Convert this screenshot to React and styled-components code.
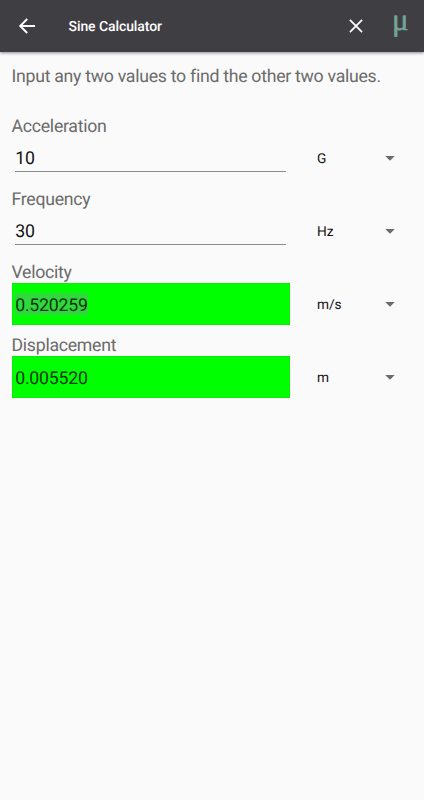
import React from "react";
import styled, { createGlobalStyle } from "styled-components";

const GlobalStyle = createGlobalStyle`
  *, *::before, *::after { box-sizing: border-box; }
  body { margin: 0; background: #fafafa; font-family: Roboto, sans-serif; text-rendering: geometricPrecision; }
`;

const Screen = styled.div`
  display: flex;
  flex-direction: column;
  height: 800px;
  overflow: hidden;
  background: #fafafa;
`;

const Toolbar = styled.header`
  display: flex;
  align-items: center;
  flex: none;
  height: 52px;
  padding: 0 14px 0 18px;
  background: #3f3e43;
  box-shadow: 0 1px 3px rgba(0, 0, 0, 0.45);
`;

const IconButton = styled.button`
  display: flex;
  padding: 0;
  border: 0;
  background: none;
  color: #fff;
`;

const Title = styled.h1`
  flex: 1;
  margin: 2px 0 0 32.5px;
  color: #fff;
  font-size: 14px;
  font-weight: 500;
  letter-spacing: -0.08px;
  line-height: 20px;
  white-space: nowrap;
`;

const Brand = styled.span`
  width: 18px;
  margin: -12px 0 0 29.5px;
  color: #74a598;
  font: 31px/36px "Liberation Serif", serif;
  -webkit-text-stroke: 0.5px #74a598;
`;

const Content = styled.main`
  padding: 14px 12px 14px 11.5px;
`;

const Intro = styled.p`
  margin: 0 0 29px;
  color: #6b6b6b;
  font-size: 17.7px;
  letter-spacing: -0.28px;
  line-height: 22px;
  white-space: nowrap;
`;

const Form = styled.div`
  display: flex;
  flex-direction: column;
  gap: 11px;
`;

const Quantity = styled.div`
  display: grid;
  grid-template-columns: 278.5px 1fr;
  grid-template-rows: 20px 42px;
  column-gap: 27px;
`;

const Label = styled.label`
  grid-column: 1 / -1;
  color: #6b6b6b;
  font-size: 17.7px;
  letter-spacing: -0.27px;
  line-height: 20px;
`;

const Field = styled.div`
  display: flex;
  align-items: center;
  padding: 0 4px 0 3.7px;
  background: ${(p) => (p.$computed ? "#00ff00" : "transparent")};
  box-shadow: ${(p) => (p.$computed ? "inset 0 0 0 0.5px #12dc12" : "none")};
`;

const Value = styled.div`
  width: 100%;
  height: ${(p) => (p.$underlined ? "27px" : "22px")};
  padding-top: ${(p) => (p.$underlined ? "2px" : "0")};
  border-bottom: ${(p) => (p.$underlined ? "1px solid #8c8c8c" : "0")};
  color: ${(p) => (p.$underlined ? "#111" : "#0b350b")};
  font-size: 17.7px;
  letter-spacing: -0.22px;
  line-height: ${(p) => (p.$underlined ? "25px" : "26px")};
`;

const Digits = styled.span`
  display: inline-block;
  height: 22px;
  background: ${(p) => (p.$selected ? "#30d83d" : "transparent")};
`;

const UnitSelect = styled.div`
  display: flex;
  align-items: center;
  justify-content: space-between;
  padding-right: 17px;
  color: #111;
  font-size: 13.7px;
  letter-spacing: -0.1px;
  line-height: 18px;
`;

const UnitName = styled.span`
  padding-top: 2px;
`;

const quantities = [
  { label: "Acceleration", value: "10", unit: "G" },
  { label: "Frequency", value: "30", unit: "Hz" },
  { label: "Velocity", value: "0.520259", unit: "m/s", computed: true, selected: true },
  { label: "Displacement", value: "0.005520", unit: "m", computed: true },
];

function BackIcon() {
  return (
    <svg width="18" height="18" viewBox="0 0 18 18" fill="none" stroke="currentColor" strokeWidth="1.9">
      <path d="M17 9H2.4M9.2 2L2.2 9l7 7" />
    </svg>
  );
}

function CloseIcon() {
  return (
    <svg width="14" height="14" viewBox="0 0 14 14" fill="none" stroke="currentColor" strokeWidth="1.8">
      <path d="M.9.9l12.2 12.2M13.1.9L.9 13.1" />
    </svg>
  );
}

function CaretIcon() {
  return (
    <svg width="10" height="5" viewBox="0 0 10 5">
      <path d="M.3 0h9.4L5 4.8z" fill="#6b6b6b" />
    </svg>
  );
}

export default function App() {
  return (
    <Screen>
      <GlobalStyle />
      <Toolbar>
        <IconButton aria-label="Back"><BackIcon /></IconButton>
        <Title>Sine Calculator</Title>
        <IconButton aria-label="Clear"><CloseIcon /></IconButton>
        <Brand>μ</Brand>
      </Toolbar>
      <Content>
        <Intro>Input any two values to find the other two values.</Intro>
        <Form>
          {quantities.map((q) => (
            <Quantity key={q.label}>
              <Label>{q.label}</Label>
              <Field $computed={q.computed}>
                <Value $underlined={!q.computed}>
                  <Digits $selected={q.selected}>{q.value}</Digits>
                </Value>
              </Field>
              <UnitSelect>
                <UnitName>{q.unit}</UnitName>
                <CaretIcon />
              </UnitSelect>
            </Quantity>
          ))}
        </Form>
      </Content>
    </Screen>
  );
}
